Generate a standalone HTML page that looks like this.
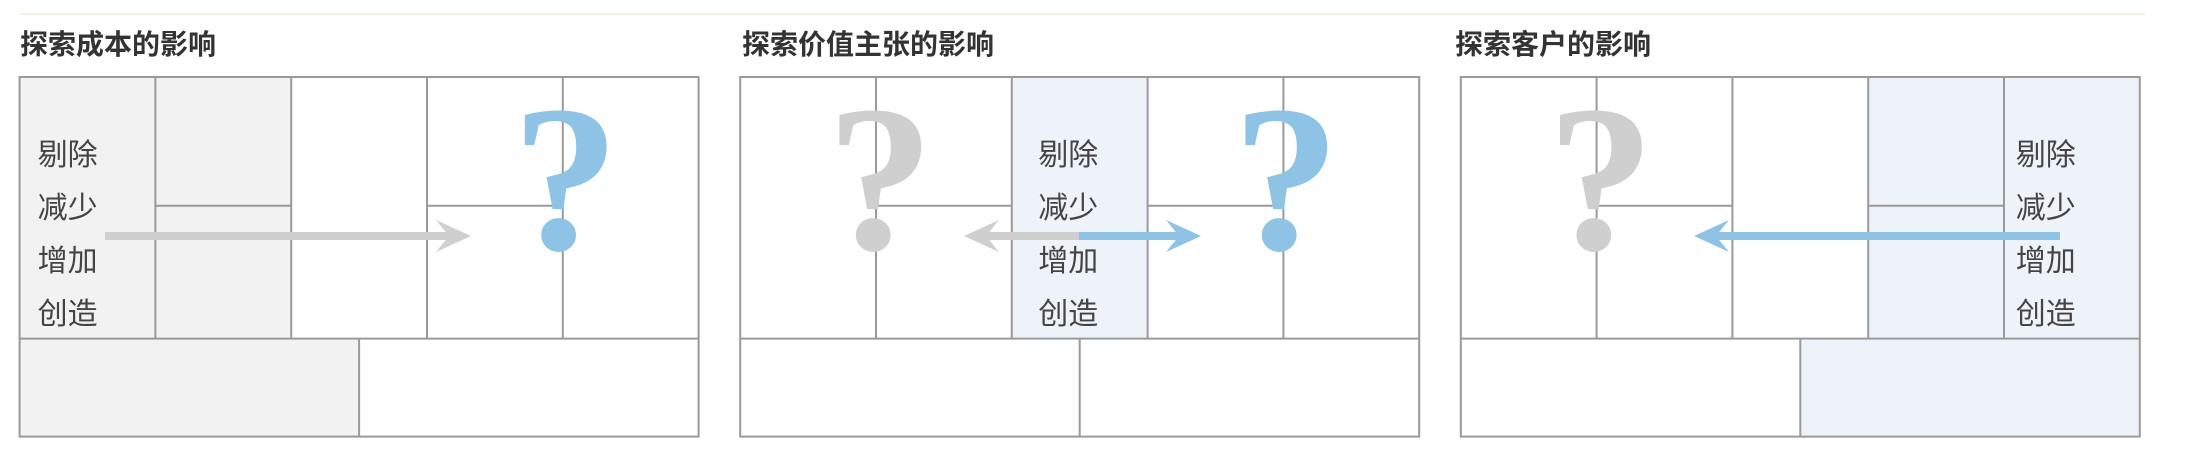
<!DOCTYPE html>
<html><head><meta charset="utf-8"><style>
html,body{margin:0;padding:0;background:#fff;}
svg{display:block}
text{font-family:"Liberation Sans","Noto Sans CJK SC",sans-serif;}
text.q{font-family:"Liberation Serif","DejaVu Serif",serif;font-weight:bold;font-size:205px;}
</style></head><body>
<svg width="2194" height="476" viewBox="0 0 2194 476" xmlns="http://www.w3.org/2000/svg">
<line x1="20" y1="14" x2="2145" y2="14" stroke="#f5efe6" stroke-width="2"/>
<g font-size="28" fill="#333" font-weight="bold">
<text x="20" y="54">探索成本的影响</text>
<text x="742" y="54">探索价值主张的影响</text>
<text x="1455" y="54">探索客户的影响</text>
</g>

<!-- Panel 1 -->
<g transform="translate(19.6,0)">
<rect x="0" y="77" width="271.6" height="261.6" fill="#f2f2f2"/>
<rect x="0" y="338.6" width="339.5" height="98" fill="#f2f2f2"/>
<g stroke="#9a9a9a" stroke-width="2" fill="none">
<rect x="0" y="77" width="679" height="359.6"/>
<line x1="0" y1="338.6" x2="679" y2="338.6"/>
<line x1="135.8" y1="77" x2="135.8" y2="338.6"/>
<line x1="271.6" y1="77" x2="271.6" y2="338.6"/>
<line x1="407.4" y1="77" x2="407.4" y2="338.6"/>
<line x1="543.2" y1="77" x2="543.2" y2="338.6"/>
<line x1="135.8" y1="205.7" x2="271.6" y2="205.7"/>
<line x1="407.4" y1="205.7" x2="543.2" y2="205.7"/>
<line x1="339.5" y1="338.6" x2="339.5" y2="436.6"/>
</g>
<g font-size="30" fill="#444">
<text x="18" y="165">剔除</text><text x="18" y="218">减少</text><text x="18" y="271">增加</text><text x="18" y="324">创造</text>
</g>
<text class="q" transform="translate(546,249) scale(1.05,1.02)" fill="#8ec3e6" text-anchor="middle">?</text>
</g>
<line x1="105" y1="236" x2="460" y2="236" stroke="#cfcfcf" stroke-width="8"/>
<polygon points="471,236 436,220 449,236 436,252" fill="#cfcfcf"/>

<!-- Panel 2 -->
<g transform="translate(740.2,0)">
<rect x="271.6" y="77" width="135.8" height="261.6" fill="#eef3fa"/>
<g stroke="#9a9a9a" stroke-width="2" fill="none">
<rect x="0" y="77" width="679" height="359.6"/>
<line x1="0" y1="338.6" x2="679" y2="338.6"/>
<line x1="135.8" y1="77" x2="135.8" y2="338.6"/>
<line x1="271.6" y1="77" x2="271.6" y2="338.6"/>
<line x1="407.4" y1="77" x2="407.4" y2="338.6"/>
<line x1="543.2" y1="77" x2="543.2" y2="338.6"/>
<line x1="135.8" y1="205.7" x2="271.6" y2="205.7"/>
<line x1="407.4" y1="205.7" x2="543.2" y2="205.7"/>
<line x1="339.5" y1="338.6" x2="339.5" y2="436.6"/>
</g>
<g font-size="30" fill="#444">
<text x="298" y="165">剔除</text><text x="298" y="218">减少</text><text x="298" y="271">增加</text><text x="298" y="324">创造</text>
</g>
<text class="q" transform="translate(140,249) scale(1.05,1.02)" fill="#cfcfcf" text-anchor="middle">?</text>
<text class="q" transform="translate(546,249) scale(1.05,1.02)" fill="#8ec3e6" text-anchor="middle">?</text>
</g>
<line x1="975" y1="236" x2="1079" y2="236" stroke="#cfcfcf" stroke-width="8"/>
<polygon points="964,236 999,220 986,236 999,252" fill="#cfcfcf"/>
<line x1="1079" y1="236" x2="1190" y2="236" stroke="#8ec3e6" stroke-width="8"/>
<polygon points="1201,236 1166,220 1179,236 1166,252" fill="#8ec3e6"/>

<!-- Panel 3 -->
<g transform="translate(1460.8,0)">
<rect x="407.4" y="77" width="271.6" height="261.6" fill="#eef3fa"/>
<rect x="339.5" y="338.6" width="339.5" height="98" fill="#eef3fa"/>
<g stroke="#9a9a9a" stroke-width="2" fill="none">
<rect x="0" y="77" width="679" height="359.6"/>
<line x1="0" y1="338.6" x2="679" y2="338.6"/>
<line x1="135.8" y1="77" x2="135.8" y2="338.6"/>
<line x1="271.6" y1="77" x2="271.6" y2="338.6"/>
<line x1="407.4" y1="77" x2="407.4" y2="338.6"/>
<line x1="543.2" y1="77" x2="543.2" y2="338.6"/>
<line x1="135.8" y1="205.7" x2="271.6" y2="205.7"/>
<line x1="407.4" y1="205.7" x2="543.2" y2="205.7"/>
<line x1="339.5" y1="338.6" x2="339.5" y2="436.6"/>
</g>
<g font-size="30" fill="#444">
<text x="555" y="165">剔除</text><text x="555" y="218">减少</text><text x="555" y="271">增加</text><text x="555" y="324">创造</text>
</g>
<text class="q" transform="translate(140,249) scale(1.05,1.02)" fill="#cfcfcf" text-anchor="middle">?</text>
</g>
<line x1="1705" y1="236" x2="2060" y2="236" stroke="#8ec3e6" stroke-width="8"/>
<polygon points="1694,236 1729,220 1716,236 1729,252" fill="#8ec3e6"/>
</svg>
</body></html>
